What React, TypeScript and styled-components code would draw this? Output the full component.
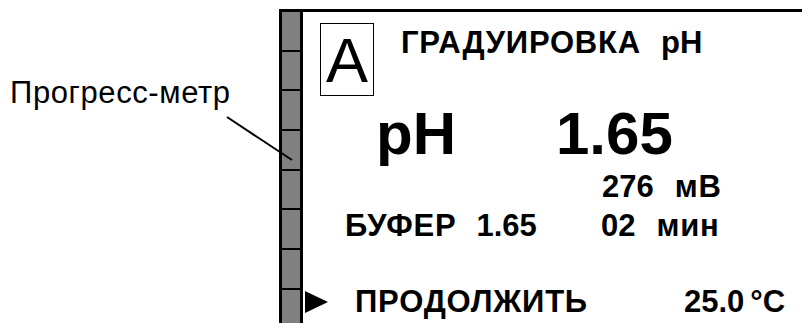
import * as React from 'react'
import styled, { createGlobalStyle } from 'styled-components'

const GlobalStyle = createGlobalStyle`
  html, body {
    margin: 0;
    padding: 0;
    background: #ffffff;
  }
  body {
    font-family: "Liberation Sans", Arial, sans-serif;
    color: #000000;
  }
`

const Root = styled.div`
  position: relative;
  display: flex;
  width: 802px;
  height: 323px;
  overflow: hidden;
  background: #ffffff;
`

const Legend = styled.div`
  width: 279px;
  flex: none;
  padding: 77px 0 0 10px;
  box-sizing: border-box;
`

const LegendLabel = styled.div`
  font-size: 31px;
  line-height: 1;
  letter-spacing: 0.6px;
  white-space: nowrap;
`

const Pointer = styled.svg`
  position: absolute;
  left: 0;
  top: 0;
  pointer-events: none;
`

const Panel = styled.div`
  flex: 1;
  display: flex;
  margin-top: 9px;
  border-top: 3px solid #000;
`

const Meter = styled.div`
  flex: none;
  width: 18px;
  border-left: 3px solid #000;
  border-right: 3px solid #000;
  background: #808080;
  display: flex;
  flex-direction: column;
`

const Segment = styled.div`
  flex: none;
  height: 37.7px;
  border-bottom: 2px solid #000;
`

const Screen = styled.div`
  flex: 1;
  display: flex;
  flex-direction: column;
`

const Header = styled.div`
  display: flex;
  align-items: flex-start;
  padding: 11px 0 0 17px;
`

const ModeBox = styled.div`
  width: 52px;
  height: 69px;
  border: 1px solid #000;
  display: flex;
  align-items: center;
  justify-content: center;
  font-size: 63px;
  line-height: 1;
  padding-top: 2px;
  box-sizing: content-box;
`

const Title = styled.div`
  margin: 4px 0 0 27px;
  display: flex;
  gap: 20px;
  font-size: 31px;
  font-weight: 700;
  line-height: 1;
  white-space: nowrap;
`

const Line = styled.div<{ $indent: number; $top: number; $size: number }>`
  display: flex;
  align-items: center;
  padding-left: ${p => p.$indent}px;
  margin-top: ${p => p.$top}px;
  font-size: ${p => p.$size}px;
  font-weight: 700;
  line-height: 1;
  white-space: nowrap;
`

const Cell = styled.span<{ $width?: number }>`
  display: inline-flex;
  flex: none;
  width: ${p => (p.$width ? `${p.$width}px` : 'auto')};
`

// cyrillic words on the display are set a touch wider than the digits
const Word = styled.span`
  letter-spacing: 0.8px;
`

const Unit = styled.span<{ $gap: number }>`
  margin-left: ${p => p.$gap}px;
`

const Cursor = styled.svg`
  flex: none;
  margin-right: 27px;
`

const segments = Array.from({ length: 8 }, (_, i) => i)

export default function App() {
  return (
    <Root>
      <GlobalStyle />
      <Legend>
        <LegendLabel>Прогресс-метр</LegendLabel>
      </Legend>

      <Panel>
        <Meter>
          {segments.map(i => (
            <Segment key={i} />
          ))}
        </Meter>

        <Screen>
          <Header>
            <ModeBox>A</ModeBox>
            <Title>
              <Word>ГРАДУИРОВКА</Word>
              <span>pH</span>
            </Title>
          </Header>

          <Line $indent={73} $top={8} $size={60}>
            <Cell $width={180}>pH</Cell>
            <Cell>1.65</Cell>
          </Line>

          <Line $indent={299} $top={7} $size={31}>
            <Cell>
              276
              <Unit $gap={21}>
                <Word>мВ</Word>
              </Unit>
            </Cell>
          </Line>

          <Line $indent={42} $top={8} $size={31}>
            <Cell $width={256}>
              <Word>БУФЕР</Word>
              <Unit $gap={20}>1.65</Unit>
            </Cell>
            <Cell>
              02
              <Unit $gap={21}>
                <Word>мин</Word>
              </Unit>
            </Cell>
          </Line>

          <Line $indent={2} $top={45} $size={31}>
            <Cursor width="23" height="22" viewBox="0 0 23 22">
              <polygon points="0,0 23,11 0,22" fill="#000" />
            </Cursor>
            <Cell $width={329}>
              <Word>ПРОДОЛЖИТЬ</Word>
            </Cell>
            <Cell>
              25.0<Unit $gap={6}>°C</Unit>
            </Cell>
          </Line>
        </Screen>
      </Panel>

      <Pointer width="802" height="323" viewBox="0 0 802 323">
        <line x1="227" y1="117" x2="292" y2="160" stroke="#000" strokeWidth="2" />
      </Pointer>
    </Root>
  )
}
